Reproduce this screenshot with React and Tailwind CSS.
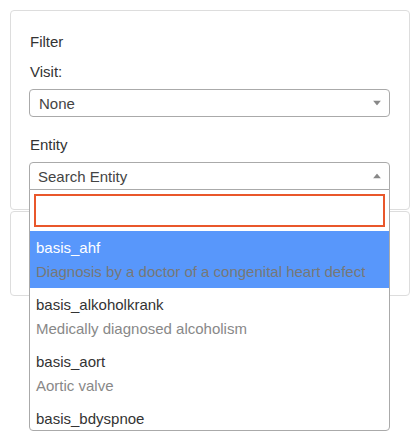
import React from "react";

const options = [
  { name: "basis_ahf", desc: "Diagnosis by a doctor of a congenital heart defect" },
  { name: "basis_alkoholkrank", desc: "Medically diagnosed alcoholism" },
  { name: "basis_aort", desc: "Aortic valve" },
  { name: "basis_bdyspnoe" },
];

function Arrow({ up }) {
  return (
    <svg width="8" height="5" viewBox="0 0 8 5" className="absolute right-[8px] top-1/2 -translate-y-1/2">
      <path d={up ? "M0 5 L4 0 L8 5 Z" : "M0 0 L8 0 L4 5 Z"} fill="#888" />
    </svg>
  );
}

export default function App() {
  return (
    <div className="w-[420px] h-[440px] bg-white text-[15px] leading-[20px] text-[#333] font-['Liberation_Sans',Arial,sans-serif] pt-[10px] px-[10px]">
      <div className="relative w-[400px] h-[200px] border border-[#ddd] rounded-[4px] px-[19px] pt-[20px]">
        <div className="relative top-px">Filter</div>
        <div className="relative top-px mt-[10px]">Visit:</div>
        <div className="relative mt-[8px] h-[28px] w-[361px] -ml-px border border-[#aaa] rounded-[4px] pl-[9px] leading-[28px] text-[#444]">
          None
          <Arrow />
        </div>
        <div className="relative top-px mt-[17px]">Entity</div>
        <div className="relative mt-[8px] w-[361px] -ml-px z-10">
          <div className="relative h-[28px] border border-[#aaa] rounded-t-[4px] pl-[8px] leading-[28px] text-[#444] bg-white">
            Search Entity
            <Arrow up />
          </div>
          <div className="absolute left-0 top-[27px] w-[361px] bg-white border border-[#aaa] rounded-b-[4px] overflow-hidden">
            <div className="p-[4px]">
              <div className="h-[33px] border-2 border-[#e9572b]" />
            </div>
            <div className="h-[199px] overflow-hidden">
              {options.map((o, i) => (
                <div
                  key={o.name}
                  className={`pl-[6px] pt-[7px] pb-[6px] ${i === 0 ? "bg-[#5897fb] text-white" : "text-[#333]"}`}
                >
                  <div>{o.name}</div>
                  {o.desc && (
                    <div className={`mt-[4px] ${i === 0 ? "text-[#777]" : "text-[#888]"}`}>{o.desc}</div>
                  )}
                </div>
              ))}
            </div>
          </div>
        </div>
      </div>
      <div className="mt-px w-[400px] h-[85px] border border-[#ddd] rounded-[4px]" />
    </div>
  );
}
